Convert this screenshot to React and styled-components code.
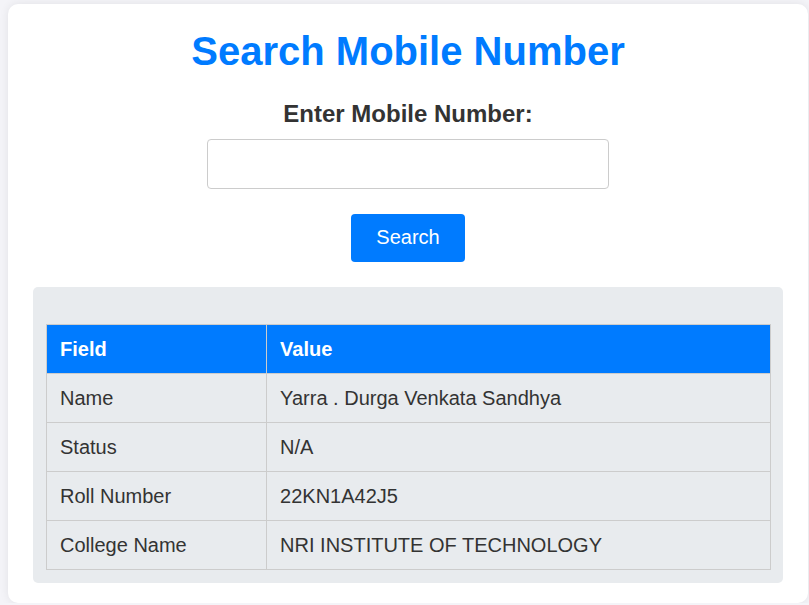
import React, { useState } from "react";
import styled, { createGlobalStyle } from "styled-components";

const GlobalStyle = createGlobalStyle`
  * {
    box-sizing: border-box;
  }

  body {
    margin: 0;
    padding: 4px 0 0 8px;
    background-color: #f4f4f8;
    font-family: "Liberation Sans", Arial, sans-serif;
  }
`;

const Card = styled.div`
  width: 800px;
  background-color: #ffffff;
  border-radius: 10px;
  box-shadow: 0 0 10px rgba(0, 0, 0, 0.08);
  padding: 24px 25px 20px 25px;
  display: flex;
  flex-direction: column;
  align-items: center;
`;

const Title = styled.h1`
  margin: 0;
  font-size: 40px;
  font-weight: bold;
  color: #007bff;
  line-height: 46px;
`;

const Label = styled.label`
  margin-top: 26px;
  font-size: 24px;
  font-weight: bold;
  color: #333333;
  line-height: 28px;
`;

const Input = styled.input`
  margin-top: 11px;
  width: 402px;
  height: 50px;
  padding: 10px;
  font-size: 16px;
  border: 1px solid #cccccc;
  border-radius: 4px;
  outline: none;
`;

const Button = styled.button`
  margin-top: 25px;
  width: 114px;
  height: 48px;
  border: none;
  border-radius: 4px;
  background-color: #007bff;
  color: #ffffff;
  font-family: "Liberation Sans", Arial, sans-serif;
  font-size: 20px;
  padding: 0 0 2px;
  cursor: pointer;
`;

const Result = styled.div`
  align-self: stretch;
  margin-top: 25px;
  background-color: #e8ebee;
  border-radius: 5px;
  padding: 37px 12px 13px 13px;
`;

const Table = styled.table`
  width: 100%;
  border-collapse: collapse;
  font-size: 20px;
`;

const Th = styled.th`
  width: ${(p) => p.$width || "auto"};
  background-color: #007bff;
  color: #ffffff;
  text-align: left;
  font-weight: bold;
  line-height: 20px;
  padding: 14px 13px;
  border: 1px solid #cccccc;
`;

const Td = styled.td`
  color: #333333;
  line-height: 20px;
  padding: 14px 13px;
  border: 1px solid #cccccc;
`;

const rows = [
  ["Name", "Yarra . Durga Venkata Sandhya"],
  ["Status", "N/A"],
  ["Roll Number", "22KN1A42J5"],
  ["College Name", "NRI INSTITUTE OF TECHNOLOGY"],
];

export default function App() {
  const [mobile, setMobile] = useState("");

  return (
    <>
      <GlobalStyle />
      <Card>
        <Title>Search Mobile Number</Title>
        <Label htmlFor="mobile">Enter Mobile Number:</Label>
        <Input id="mobile" value={mobile} onChange={(e) => setMobile(e.target.value)} />
        <Button>Search</Button>
        <Result>
          <Table>
            <thead>
              <tr>
                <Th $width="30.4%">Field</Th>
                <Th>Value</Th>
              </tr>
            </thead>
            <tbody>
              {rows.map(([field, value]) => (
                <tr key={field}>
                  <Td>{field}</Td>
                  <Td>{value}</Td>
                </tr>
              ))}
            </tbody>
          </Table>
        </Result>
      </Card>
    </>
  );
}
